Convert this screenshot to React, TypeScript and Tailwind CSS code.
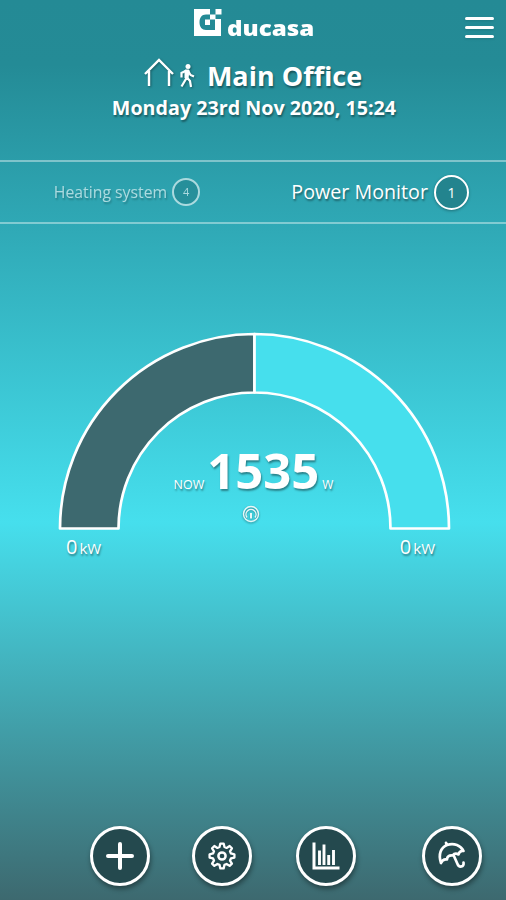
import React from 'react';

const textShadow = '[text-shadow:1px_2px_2px_rgba(0,0,0,0.4)]';

function Logo() {
  return (
    <div className="flex h-[30px] items-end">
      <svg width="28" height="28" viewBox="0 0 28 28" fill="white" className="mb-[1px] ml-px">
        <path
          fillRule="evenodd"
          d="M0 0H16V5.500H12C7.500 5.500 5.500 9 5.500 13.500C5.500 18 8 21 12 21H21V10H27V27H0ZM11 10.500H16V16H11Z"
        />
        <path d="M16 5.500H21.500V10.500H16ZM21.500 0H27.500V5.500H21.500Z" />
      </svg>
      <span className="ml-[5px] inline-block origin-left scale-x-[1.15] text-[21px] leading-[19px] font-extrabold">
        ducasa
      </span>
    </div>
  );
}

function HomeAway() {
  return (
    <svg width="52" height="32" viewBox="0 0 52 32" fill="none" stroke="white" strokeWidth="2.4" className="mb-[6px] drop-shadow-[1px_1px_1px_rgba(0,0,0,0.35)]">
      <path d="M1 17L15 3L29 17M5 14V29M25 14V29" strokeLinejoin="miter" />
      <circle cx="44" cy="9.500" r="2.500" fill="white" stroke="none" />
      <path d="M42 14L44 14.500L42.500 21L37.500 29.500M42.500 20L46 24L47 30M41.500 14L37.500 16V20.500M44.500 14.500L46.500 18L50 19.500" strokeWidth="2.2" />
      <path d="M41 13H45L44 21H41Z" fill="white" strokeWidth="1" />
    </svg>
  );
}

interface TabProps {
  label: string;
  count: number;
  active?: boolean;
}

function Tab({ label, count, active }: TabProps) {
  if (active) {
    return (
      <div className="flex items-center gap-[6px]">
        <span className={`text-[19.700px] leading-7 ${textShadow}`}>{label}</span>
        <span className="flex h-[35px] w-[35px] items-center justify-center rounded-full border-[2.5px] border-white bg-[#23848e] text-[14px] font-medium shadow-[0_1px_3px_rgba(0,0,0,0.3)]">
          {count}
        </span>
      </div>
    );
  }
  return (
    <div className="flex items-center gap-[5px] opacity-60">
      <span className={`text-[15.800px] leading-6 ${textShadow}`}>{label}</span>
      <span className="flex h-7 w-7 items-center justify-center rounded-full border-2 border-white bg-[#23848e] text-[11px] font-medium">
        {count}
      </span>
    </div>
  );
}

function Gauge() {
  return (
    <svg width="394" height="200" viewBox="0 0 394 200" stroke="white" strokeWidth="2.7" strokeLinejoin="round">
      <path d="M2 196.500A194.500 194.500 0 0 1 196.500 2V60.500A136 136 0 0 0 60.500 196.500Z" fill="#3d696f" />
      <path d="M196.500 2A194.500 194.500 0 0 1 391 196.500H332.500A136 136 0 0 0 196.500 60.500Z" fill="#46dfed" />
    </svg>
  );
}

function ScaleLabel({ value }: { value: number }) {
  return (
    <span className={`leading-7 ${textShadow}`}>
      <span className="text-[20px]">{value}</span>
      <span className="ml-[2px] text-[15px]">kW</span>
    </span>
  );
}

function RoundButton({ label, children }: { label: string; children: React.ReactNode }) {
  return (
    <button
      aria-label={label}
      className="flex h-[60px] w-[60px] items-center justify-center rounded-full border-3 border-white bg-[#24494e] shadow-[1px_3px_5px_rgba(0,0,0,0.4)]"
    >
      <svg
        width="30"
        height="30"
        viewBox="0 0 30 30"
        fill="none"
        stroke="white"
        strokeWidth="2.5"
        strokeLinecap="round"
        strokeLinejoin="round"
      >
        {children}
      </svg>
    </button>
  );
}

export default function App() {
  return (
    <div className="flex h-[900px] w-[506px] flex-col overflow-hidden bg-[linear-gradient(180deg,#248a95_0px,#248b96_65px,#2fa8b5_222px,#46dfed_522px,#3d696f_900px)] font-['Open_Sans','Noto_Sans',sans-serif] text-white">
      <header className="relative flex h-[160px] flex-col items-center pt-2">
        <div className="flex w-[120px]">
          <Logo />
        </div>
        <button aria-label="Menu" className="absolute top-[17px] right-3 flex w-[29px] flex-col gap-[6px]">
          <span className="h-[3px] rounded-full bg-white shadow" />
          <span className="h-[3px] rounded-full bg-white shadow" />
          <span className="h-[3px] rounded-full bg-white shadow" />
        </button>
        <div className="mt-[19px] flex h-[38px] items-center gap-[11px]">
          <HomeAway />
          <h1 className={`text-[27px] leading-[38px] font-bold ${textShadow}`}>Main Office</h1>
        </div>
        <p className={`ml-[2px] text-[19.700px] leading-[26px] font-bold whitespace-nowrap ${textShadow}`}>
          Monday 23rd Nov 2020, 15:24
        </p>
      </header>

      <nav className="grid h-[64px] grid-cols-2 border-y-2 border-white/40">
        <div className="flex items-center justify-center pl-px">
          <Tab label="Heating system" count={4} />
        </div>
        <div className="flex items-center justify-end pr-[37px]">
          <Tab label="Power Monitor" count={1} active />
        </div>
      </nav>

      <main className="flex flex-1 flex-col items-center pt-[108px]">
        <div className="relative ml-[3px] h-[200px] w-[394px]">
          <Gauge />
          <div className="absolute inset-x-0 top-[106px] flex flex-col items-center">
            <div className={`flex items-baseline gap-[3px] pr-[2px] leading-[64px] ${textShadow}`}>
              <span className="text-[12.500px]">NOW</span>
              <span className="text-[49px] font-bold">1535</span>
              <span className="text-[12px]">W</span>
            </div>
            <svg
              width="18"
              height="18"
              viewBox="0 0 18 18"
              fill="none"
              stroke="#e9f7f8"
              strokeWidth="1.4"
              className="-mt-[12px] mr-[8px] drop-shadow-[0_1px_1px_rgba(0,0,0,0.4)]"
            >
              <circle cx="9" cy="9" r="7.5" />
              <path d="M5 12.500A5 5 0 1 1 13 12.500" />
              <path d="M9 8V13.500" strokeWidth="2" />
            </svg>
          </div>
        </div>
        <div className="mr-[5px] flex w-[369px] justify-between pt-px">
          <ScaleLabel value={0} />
          <ScaleLabel value={0} />
        </div>
      </main>

      <footer className="flex h-[74px] pl-[90px]">
        <RoundButton label="Add">
          <path d="M15 3V27M3 15H27" strokeWidth="4" />
        </RoundButton>
        <div className="ml-[42px]">
          <RoundButton label="Settings">
            <path
              transform="translate(1.2 0.7) scale(0.92)"
              d="M13.200 2H16.800L17.700 5.800L20 6.800L23.300 4.700L25.800 7.200L23.700 10.500L24.700 12.800L28.500 13.700V17.300L24.700 18.200L23.700 20.500L25.800 23.800L23.300 26.300L20 24.200L17.700 25.200L16.800 29H13.200L12.300 25.200L10 24.200L6.700 26.300L4.200 23.800L6.300 20.500L5.300 18.200L1.500 17.300V13.700L5.300 12.800L6.300 10.500L4.200 7.200L6.700 4.700L10 6.800L12.300 5.800Z"
            />
            <circle cx="15" cy="15" r="3.600" />
          </RoundButton>
        </div>
        <div className="ml-[44px]">
          <RoundButton label="Statistics">
            <path d="M3 1.500V27H28.500" strokeLinecap="butt" strokeLinejoin="miter" strokeWidth="3" />
            <path d="M8.500 9.500V24M13 3.500V24M17.700 14V24M22.500 9V24" strokeLinecap="butt" strokeWidth="2.900" />
          </RoundButton>
        </div>
        <div className="ml-[66px]">
          <RoundButton label="Holiday">
            <path
              d="M4 22C1 13 4 6.500 10 4C17 1.500 24 4.500 26.500 10C24 9.500 22 11 21.500 13.500C19.500 12.300 17 12.700 15.500 14.500C12.500 14 10 15.500 10 18.500C7.500 18 5 19.500 4 22ZM9 1.800L9.800 4M16.500 14L20.500 23C22 27 27.500 26 26.500 21.500"
              strokeWidth="2.7"
            />
          </RoundButton>
        </div>
      </footer>
    </div>
  );
}
